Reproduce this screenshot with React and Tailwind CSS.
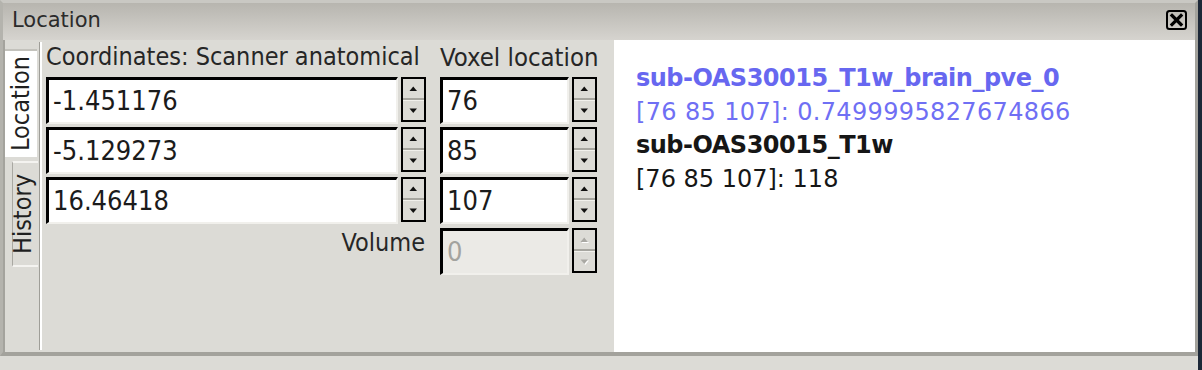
import React from "react"

const cond = "font-['DejaVu_Sans_Condensed','DejaVu_Sans',sans-serif] font-stretch-condensed"

const Arrow = ({ down, disabled }) => (
  <svg width="9" height="6" viewBox="0 0 9 6" className="block">
    {disabled && (
      <polygon points={down ? "1.5,1.5 9,1.5 5.25,6" : "5.25,1.5 9,6 1.5,6"} fill="#ffffff" />
    )}
    <polygon
      points={down ? "0.5,0.5 8,0.5 4.25,5" : "4.25,0.5 8,5 0.5,5"}
      fill={disabled ? "#a9a8a3" : "#111111"}
    />
  </svg>
)

const Spin = ({ value, disabled }) => (
  <div className="flex gap-[3px] w-full">
    <div
      className={`h-[47px] flex-1 min-w-0 flex items-center pl-[4px] border-t-[3px] border-l-[3px] border-t-black border-l-black border-b-2 border-r-2 border-b-[#f1f0ec] border-r-[#f1f0ec] text-[27px] leading-[32px] ${
        disabled ? "bg-[#ebeae6] text-[#a3a39f]" : "bg-white text-[#1b1b1b]"
      }`}
    >
      {value}
    </div>
    <div className="w-[25px] h-[45px] border-2 border-black flex flex-col bg-[#dcdbd6]">
      <div className="flex-1 flex items-center justify-center">
        <Arrow disabled={disabled} />
      </div>
      <div className="h-[2px] bg-[#a6a59f]" />
      <div className="flex-1 flex items-center justify-center border-t border-[#f2f1ed]">
        <Arrow down disabled={disabled} />
      </div>
    </div>
  </div>
)

const rows = [
  ["-1.451176", "76"],
  ["-5.129273", "85"],
  ["16.46418", "107"],
]

export default function App() {
  return (
    <div className="w-[1202px] h-[370px] flex bg-[#dcdbd6] overflow-hidden">
      <div className="flex-1 flex flex-col">
        <div className="h-[356px] flex flex-col border-l-[3px] border-l-[#b4b3ad] border-r-[3px] border-r-[#a3a29c] border-t-[3px] border-t-[#c9c8c3] border-b-[4px] border-b-[#a3a29c]">
          {/* title bar */}
          <div className="h-[37px] flex items-center justify-between pl-[9px] pr-[8px] bg-linear-to-b from-[#b7b5af] to-[#d6d4cf]">
            <span className="font-['DejaVu_Sans',sans-serif] text-[21px] leading-[24px] text-[#2b2b2b] pb-[3px]">
              Location
            </span>
            <svg width="21" height="20" viewBox="0 0 21 20" className="mb-[3px]">
              <rect x="1" y="1" width="19" height="18" rx="2.5" fill="none" stroke="#000" strokeWidth="2" />
              <path d="M6 5.5 L15 14.5 M15 5.5 L6 14.5" stroke="#000" strokeWidth="3.2" strokeLinecap="square" />
            </svg>
          </div>

          {/* body */}
          <div className="flex-1 flex">
            {/* vertical tabs */}
            <div className={`w-[36px] border-l-2 border-[#a4a39d] flex flex-col ${cond}`}>
              <div className="mt-[9px] w-[32px] h-[108px] bg-white border-t-2 border-[#c3c2bc] flex items-center justify-center">
                <span className="[writing-mode:vertical-rl] rotate-180 text-[25px] leading-[28px] text-[#1f1f1f]">
                  Location
                </span>
              </div>
              <div className="mt-[4px] ml-[7px] w-[26px] h-[106px] border-t-2 border-b-2 border-l border-t-[#f4f3f0] border-b-[#f4f3f0] border-l-[#a9a8a2] flex items-center justify-center">
                <span className="[writing-mode:vertical-rl] rotate-180 text-[25px] leading-[28px] text-[#1f1f1f] -ml-[6px]">
                  History
                </span>
              </div>
            </div>
            <div className="w-px bg-[#9f9e98] my-[2px]" />
            <div className="w-[2px] bg-white my-[2px]" />

            {/* coordinates form */}
            <div className={`w-[572px] pl-[4px] pt-[2px] text-[#262626] ${cond}`}>
              <div className="flex gap-[14px] h-[30px] text-[25px] leading-[30px]">
                <div className="w-[380px] whitespace-nowrap">Coordinates: Scanner anatomical</div>
                <div className="w-[157px] whitespace-nowrap text-[25.5px]">Voxel location</div>
              </div>
              <div className="mt-[5px]">
                {rows.map(([a, b]) => (
                  <div key={a} className="flex gap-[14px] h-[50px]">
                    <div className="w-[380px]">
                      <Spin value={a} />
                    </div>
                    <div className="w-[157px]">
                      <Spin value={b} />
                    </div>
                  </div>
                ))}
                <div className="flex gap-[14px] h-[50px] mt-[1px]">
                  <div className="w-[380px] text-right pr-[1px] text-[25px] leading-[30px]">Volume</div>
                  <div className="w-[157px]">
                    <Spin value="0" disabled />
                  </div>
                </div>
              </div>
            </div>

            {/* info panel */}
            <div className="flex-1 bg-white pl-[22px] pt-[22px] font-['DejaVu_Sans',sans-serif] text-[24px] leading-[33.5px] whitespace-nowrap">
              <div className="font-bold tracking-[-0.5px] text-[#6767f0]">sub-OAS30015_T1w_brain_pve_0</div>
              <div className="text-[#6f6ff4] tracking-[0.35px]">[76 85 107]: 0.7499995827674866</div>
              <div className="font-bold tracking-[-0.5px] text-[#161616]">sub-OAS30015_T1w</div>
              <div className="text-[#161616]">[76 85 107]: 118</div>
            </div>
          </div>
        </div>
        <div className="flex-1" />
      </div>
      <div className="w-[4px] bg-[#1d2838]" />
    </div>
  )
}
